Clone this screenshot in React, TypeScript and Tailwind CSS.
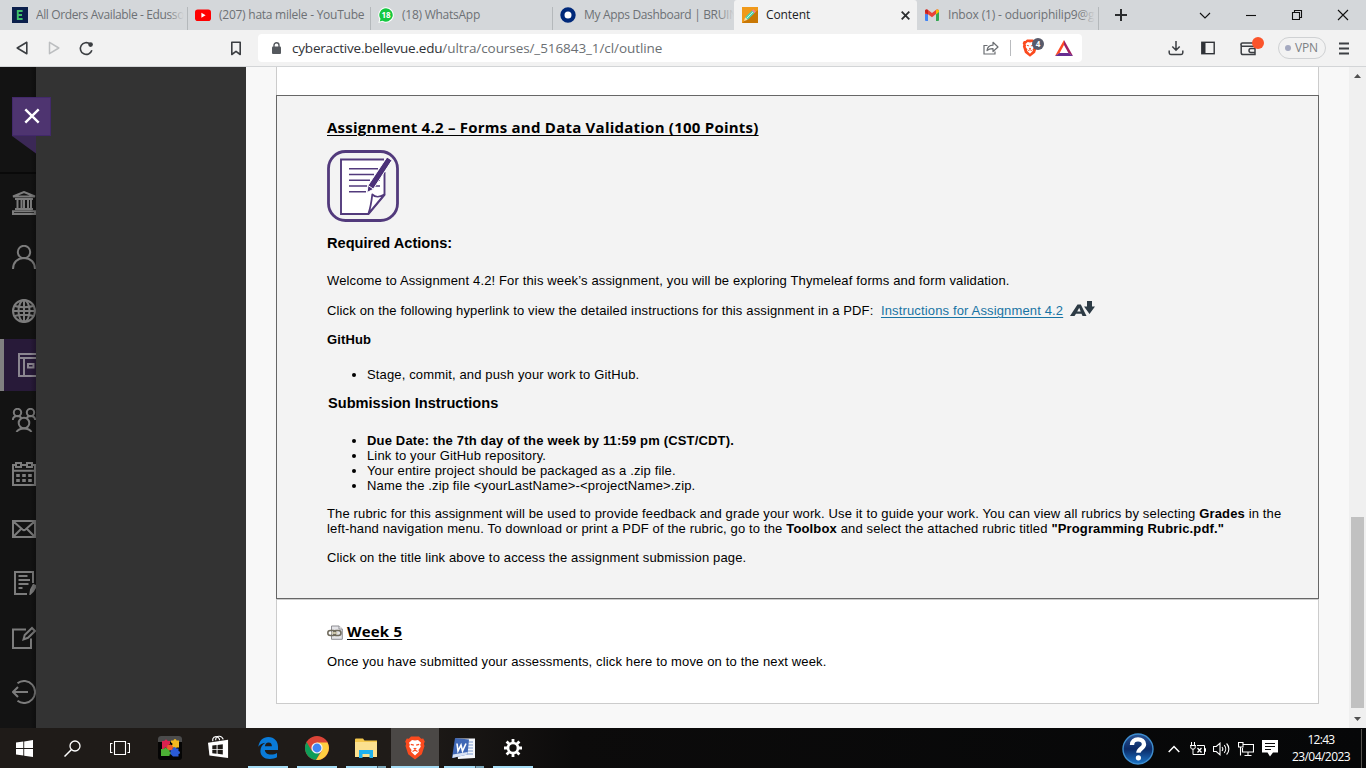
import React from "react";

const UI = "font-['Open_Sans','Noto_Sans',sans-serif]";

function BrowserTab({ icon, label, className, track, fade }: { icon: React.ReactNode; label: string; className: string; track: string; fade?: boolean }) {
  return (
    <div className={`flex h-[30px] shrink-0 items-center ${className}`}>
      <span className="flex size-4 shrink-0 items-center justify-center">{icon}</span>
      <span className={`relative ml-2 flex-1 overflow-hidden whitespace-nowrap text-[12px] leading-[18px] text-[#6d7175] ${track}`}>
        {label}
        {fade && <span className="absolute inset-y-0 right-0 w-4 bg-linear-to-r from-transparent to-[#d4d7da]" />}
      </span>
      <span className="ml-[3px] mt-[7px] h-[23px] w-px shrink-0 bg-[#b4b8bb]" />
    </div>
  );
}

function TabStrip() {
  return (
    <div className="flex h-[30px] shrink-0 bg-[#d4d7da]">
      <BrowserTab
        fade
        className="w-[188px] pl-3"
        track="tracking-[-0.38px]"
        label="All Orders Available - Edusso"
        icon={
          <svg width="16" height="16" viewBox="0 0 16 16">
            <rect width="16" height="16" fill="#0b1f4b" />
            <path d="M10.6 4H5.8v8h4.8M5.8 8h4.2" fill="none" stroke="#3fbf6a" strokeWidth="1.9" />
          </svg>
        }
      />
      <BrowserTab
        className="w-[183px] pl-[7px]"
        track="tracking-[-0.25px]"
        label="(207) hata milele - YouTube"
        icon={
          <svg width="16" height="16" viewBox="0 0 16 16">
            <rect y="2.5" width="16" height="11.5" rx="2.8" fill="#f00" />
            <path d="M6.4 5.8v5l4.2-2.5z" fill="#fff" />
          </svg>
        }
      />
      <BrowserTab
        className="w-[182px] pl-[7px]"
        track="tracking-[-0.25px]"
        label="(18) WhatsApp"
        icon={
          <svg width="16" height="16" viewBox="0 0 16 16">
            <path d="M8 .3a7.7 7.7 0 1 1-3.7 14.4L.3 15.9l1.1-4A7.7 7.7 0 0 1 8 .3z" fill="#fff" />
            <path d="M8 1.3a6.7 6.7 0 1 1-3.5 12.4l-2.8.9.8-2.8A6.7 6.7 0 0 1 8 1.3z" fill="#14c840" />
            <text x="8" y="11" textAnchor="middle" fontSize="8" fontWeight="700" fill="#fff" fontFamily="Open Sans, sans-serif">18</text>
          </svg>
        }
      />
      <BrowserTab
        fade
        className="w-[181px] pl-[7px] [&>span:last-child]:hidden"
        track="tracking-[-0.33px]"
        label="My Apps Dashboard | BRUIN"
        icon={
          <svg width="16" height="16" viewBox="0 0 16 16">
            <circle cx="8" cy="8" r="5.6" fill="#fff" stroke="#00297a" strokeWidth="4.2" />
          </svg>
        }
      />
      <div className="flex h-[30px] w-[183px] shrink-0 items-center rounded-t-[3px] bg-[#f2f2f2] pl-2 pr-[6px]">
        <svg width="16" height="16" viewBox="0 0 16 16">
          <rect width="16" height="16" fill="#f09a1a" />
          <path d="M0 16 16 3v13z" fill="#c97805" />
          <path d="M2 14l1.2-3.8 2.6 2.6z" fill="#f6dcae" />
          <path d="M3.2 10.2 10 3.4l2.6 2.6-6.8 6.8z" fill="#4fd1b0" />
          <path d="M4.5 11.5 11.3 4.7" stroke="#c9f5e4" strokeWidth="1" />
          <path d="m10 3.4 1.3-1.2 2.6 2.6L12.6 6z" fill="#f27d9d" />
        </svg>
        <span className="ml-2 text-[12px] leading-[18px] tracking-[-0.1px] text-[#202124]">Content</span>
        <svg className="ml-auto" width="11" height="11" viewBox="0 0 11 11">
          <path d="m1.700 1.700 7.600 7.600M9.300 1.700 1.700 9.300" stroke="#2c2e30" strokeWidth="1.800" />
        </svg>
      </div>
      <BrowserTab
        fade
        className="w-[182px] pl-[7px]"
        track="tracking-[-0.17px]"
        label="Inbox (1) - oduoriphilip9@g"
        icon={
          <svg width="16" height="16" viewBox="0 0 16 16">
            <path d="M1 3.500h3V14H2a1 1 0 0 1-1-1z" fill="#4285f4" />
            <path d="M12 3.500h3V13a1 1 0 0 1-1 1h-2z" fill="#34a853" />
            <path d="M1 7V4c0-1.700 1.800-2 2.800-1.200L8 6l4.200-3.200C13.200 2 15 2.300 15 4l-3 3-4 3.200L4 7.300z" fill="#ea4335" />
            <path d="M12 3v4.500L15 5V4c0-1.600-1.800-2-3-1z" fill="#fbbc04" />
            <path d="M1 4v1.300l3 2.300V3C2.800 2 1 2.400 1 4z" fill="#c5221f" />
          </svg>
        }
      />
      <div className="flex w-11 items-center justify-center">
        <svg width="14" height="14" viewBox="0 0 14 14">
          <path d="M7 1v12M1 7h12" stroke="#2a2c2e" strokeWidth="2" />
        </svg>
      </div>
      <div className="ml-auto flex">
        {["m1 4 5 5 5-5", "M1 6.500h10", "M3.500 3.500v-2h7v7h-2M1.500 3.500h7v7h-7z", "m1 1 10 10M11 1 1 11"].map((d) => (
          <div key={d} className="flex h-[29px] w-[46px] items-center justify-center">
            <svg width="12" height="12" viewBox="0 0 12 12">
              <path d={d} fill="none" stroke="#111" strokeWidth="1.100" />
            </svg>
          </div>
        ))}
      </div>
    </div>
  );
}

function BraveLion({ w, h }: { w: number; h: number }) {
  return (
    <svg width={w} height={h} viewBox="0 0 20 24">
      <path d="M6 .5h8l2.200 2.300 2-.3 1.600 3-.9 2.300.6 2.300-2.700 8.200L10 23.500l-6.800-5.200L.5 10.100l.6-2.300L.2 5.500l1.600-3 2 .3z" fill="#fb4a1e" />
      <path d="M10 4.500 13 4l3 2.800-.8 1.900.6 2-2.400 3.200.5 1.800L10 19.500l-3.900-3.800.5-1.800-2.400-3.200.6-2L4 6.800 7 4z" fill="#fff" />
      <path d="m5.800 8.400 3 .8M14.200 8.400l-3 .8M8.700 12.200l1.300.8 1.300-.8M7.500 15.500l2.500-1.300 2.500 1.300" fill="none" stroke="#fb4a1e" strokeWidth="1.200" />
    </svg>
  );
}

function Toolbar() {
  return (
    <div className="flex h-[37px] shrink-0 items-center border-b border-[#d3d5d7] bg-[#f2f2f2]">
      <svg className="ml-4" width="12" height="14" viewBox="0 0 12 14">
        <path d="M10.800 1.300v11.400L1.200 7z" fill="none" stroke="#3b3e42" strokeWidth="1.600" strokeLinejoin="round" />
      </svg>
      <svg className="ml-5" width="12" height="14" viewBox="0 0 12 14">
        <path d="M1.500 1.300v11.400L10.800 7z" fill="none" stroke="#bcbec0" strokeWidth="1.500" strokeLinejoin="round" />
      </svg>
      <svg className="ml-[19px]" width="15" height="15" viewBox="0 0 15 15">
        <path d="M12.900 9.300A5.900 5.900 0 1 1 11 2.900" fill="none" stroke="#3b3e42" strokeWidth="1.600" />
        <circle cx="11.600" cy="3.600" r="2.300" fill="#3b3e42" />
      </svg>
      <svg className="ml-[136px]" width="12" height="15" viewBox="0 0 12 15">
        <path d="M1.800 1.300h8.400v12.200L6 10.400l-4.200 3.100z" fill="none" stroke="#3b3e42" strokeWidth="1.600" strokeLinejoin="round" />
      </svg>
      <div className="ml-4 flex h-7 w-[824px] items-center rounded-[4px] bg-white pl-[14px]">
        <svg width="9" height="12" viewBox="0 0 9 12">
          <rect y="4.500" width="9" height="7.500" rx="1" fill="#55595e" />
          <path d="M2 5V3.300a2.500 2.500 0 0 1 5 0V5" fill="none" stroke="#55595e" strokeWidth="1.400" />
        </svg>
        <span className="ml-[11px] text-[13.500px] leading-5 tracking-[-0.200px] whitespace-nowrap text-[#303236]">cyberactive.bellevue.edu</span>
        <span className="text-[13.500px] leading-5 tracking-[-0.080px] whitespace-nowrap text-[#6b6f73]">/ultra/courses/_516843_1/cl/outline</span>
        <svg className="ml-auto" width="16" height="14" viewBox="0 0 16 14">
          <path d="M4.500 4.500H1V13h11v-2.500" fill="none" stroke="#6b6e72" strokeWidth="1.200" />
          <path d="M4 9.500C4.500 6 7 4.300 10 4.200V1.300L15 6l-5 4.500V7.600C7.500 7.500 5.500 8 4 9.500z" fill="none" stroke="#6b6e72" strokeWidth="1.200" strokeLinejoin="round" />
        </svg>
        <span className="ml-[11px] h-4 w-px bg-[#b9bbbe]" />
        <span className="relative ml-[11px] flex">
          <BraveLion w={16} h={18} />
          <span className="absolute -top-[1px] left-[10px] flex size-3 items-center justify-center rounded-full bg-[#585b6b] text-[8px] font-bold leading-none text-white">4</span>
        </span>
        <svg className="ml-[17px] mr-[9px]" width="18" height="16" viewBox="0 0 18 16">
          <path d="M9 0 0 16l4.500-2.800L9 5z" fill="#ff4a24" />
          <path d="M9 0l9 16-4.500-2.800L9 5z" fill="#9e1f63" />
          <path d="M0 16h18l-4.500-3h-9z" fill="#662d91" />
        </svg>
      </div>
      <svg className="ml-[86px]" width="16" height="16" viewBox="0 0 16 16">
        <path d="M8 1v9M4.300 6.500 8 10.200l3.700-3.700M1.200 10.500v2.300c0 1 .6 1.700 1.600 1.700h10.400c1 0 1.600-.7 1.600-1.700v-2.300" fill="none" stroke="#3b3e42" strokeWidth="1.500" />
      </svg>
      <svg className="ml-[17px]" width="14" height="14" viewBox="0 0 14 14">
        <rect x=".8" y="1.300" width="12.400" height="11.400" fill="none" stroke="#2f3237" strokeWidth="1.400" />
        <path d="M1 1.500h3.500v11H1z" fill="#2f3237" />
      </svg>
      <span className="relative ml-[25px] flex">
        <svg width="17" height="15" viewBox="0 0 17 15">
          <path d="M13 2H2.500a1.500 1.500 0 0 0 0 3.200H15v8.300H3a1.800 1.800 0 0 1-1.800-1.800V3.500M15 7.500h-4a2 2 0 0 0 0 4h4" fill="none" stroke="#3b3e42" strokeWidth="1.500" />
        </svg>
        <span className="absolute -top-[4px] left-[12px] size-3 rounded-full bg-[#fb542b]" />
      </span>
      <div className="ml-[21px] flex h-[22px] w-12 items-center rounded-full border border-[#cfd1d3] pl-[6px]">
        <span className="size-[6px] rounded-full bg-[#a4a9c0]" />
        <span className="ml-1 text-[12px] leading-4 tracking-[-0.200px] text-[#7c8084]">VPN</span>
      </div>
      <svg className="ml-[13px]" width="10" height="13" viewBox="0 0 10 13">
        <path d="M0 1.500h10M0 6.500h10M0 11.500h10" stroke="#3d4044" strokeWidth="2" />
      </svg>
    </div>
  );
}

const navIcons: React.ReactNode[] = [
  <>
    <path d="M1 5.500 12 1l11 4.500H1zM3 8h18M5.500 8v9.500M9.500 8v9.500M12 8v9.500M16 8v9.500M19 8v9.500M3 18h18M1 20.300h22V23H1z" />
  </>,
  <>
    <circle cx="12" cy="7" r="6.200" />
    <path d="M1 24c0-6.500 4.500-11 11-11s11 4.500 11 11" />
  </>,
  <>
    <circle cx="12" cy="12" r="11" />
    <ellipse cx="12" cy="12" rx="5.500" ry="11" />
    <path d="M12 1v22M1 12h22M2.500 7c6 1.500 13 1.500 19 0M2.500 17c6-1.500 13-1.500 19 0" />
  </>,
  <>
    <path d="M24 1H1v22h23M1 5h23M6 5v18M10 11h5.500v3.500H10z" />
  </>,
  <>
    <circle cx="5.500" cy="4.500" r="3.700" />
    <circle cx="18.500" cy="4.500" r="3.700" />
    <circle cx="12" cy="15" r="5.300" />
    <path d="M.8 12c.2-2.500 2-4 4.700-4 1.700 0 3 .5 4 2M23.200 12c-.2-2.500-2-4-4.700-4-1.700 0-3 .5-4 2M4.500 24c1.500-2.500 4.500-3.500 7.500-3.500s6 1 7.500 3.500" />
  </>,
  <>
    <path d="M4 3H1v20h22V3h-3M9 3h6M1 8.800h22M4 1h5v4H4zM15 1h5v4h-5z" />
    <path d="M4.200 13.500h3.600M10.200 13.500h3.600M16.200 13.500h3.600M4.200 18.500h3.600M10.200 18.500h3.600M16.200 18.500h3.600" strokeWidth="3" />
  </>,
  <>
    <path d="M1 4h22v16H1zM1.500 4.500l9 8c1 .8 2 .8 3 0l9-8M1.500 19.500l8-8M22.500 19.500l-8-8" />
  </>,
  <>
    <path d="M15 23H3V1h18v11M6.500 5h9M6.500 9h11.500M6.500 13h10M6.500 17h4" />
    <path d="m18.500 22.500.5-3.800 2.500-4.700 2.500 1-3 5.200z" fill="#7c7c7c" />
  </>,
  <>
    <path d="M14 3.500H1V22h18V12.500" />
    <path d="m11.500 13.500 1.200-4.500L20 2l3 3-7 6.800z" />
  </>,
  <>
    <path d="M5.500 3.200A11 11 0 1 1 5.500 20.800M16 12H1M6 7l-5 5 5 5" />
  </>,
];
const navGaps = ["", "", "", "", "mt-px", "", "mt-px", "", "mt-px", ""];

function SideNav() {
  return (
    <>
      <aside className="relative w-9 shrink-0 bg-[#131313]">
        <div className="h-[107px] border-b-2 border-[#090909]" />
        <div className="h-full max-h-[554px] overflow-hidden pt-[2px]">
          {navIcons.map((icon, i) => (
            <div key={i} className={`flex h-[54px] items-center ${navGaps[i]}`}>
              <div className={i === 3 ? "flex h-[52px] w-9 items-center overflow-hidden border-l-4 border-[#808080] bg-[#281a39] pl-[14px]" : "flex w-9 pl-3"}>
                <svg className="shrink-0" width="24" height="24" viewBox="0 0 24 24" fill="none" stroke={i === 3 ? "#8b8690" : "#7c7c7c"} strokeWidth="2">
                  {icon}
                </svg>
              </div>
            </div>
          ))}
        </div>
        <div className="absolute inset-y-0 right-0 w-[6px] bg-linear-to-r from-transparent to-black/25" />
        <svg className="absolute left-3 top-[69px]" width="24" height="18" viewBox="0 0 24 18">
          <path d="M0 0h24v17.500z" fill="#3b2856" />
        </svg>
        <button className="absolute left-3 top-[30px] z-10 flex size-[39px] items-center justify-center border border-[#42296a] bg-[#4e3470] pb-[2px]">
          <svg width="16" height="16" viewBox="0 0 16 16">
            <path d="m1.300 1.300 13.400 13.400M14.700 1.300 1.300 14.700" stroke="#fff" strokeWidth="2.400" />
          </svg>
        </button>
      </aside>
      <div className="w-[210px] shrink-0 bg-[#333333]" />
    </>
  );
}

function AssignmentIcon() {
  return (
    <svg className="mt-[13px] block" width="72" height="72" viewBox="0 0 72 72">
      <rect x="1.500" y="1.500" width="69" height="69" rx="17" fill="#f3f3f3" stroke="#523a7c" strokeWidth="2.800" />
      <path d="M14 9.500h44v36L42 64H14z" fill="#fff" />
      <path d="M57 9.500H14V64h27.500L57.500 45V22" fill="none" stroke="#523a7c" strokeWidth="1.900" />
      <path d="M41.500 63.500c2-6 3-12 3.800-19 3 3 8 2.500 12 0z" fill="#fff" stroke="#523a7c" strokeWidth="1.800" strokeLinejoin="round" />
      <path d="M22 18.800h29M22 24.500h25M22 30.300h21M22 36h18M22 41.800h17M47 36h6M51 30.300h2" stroke="#523a7c" strokeWidth="1.500" />
      <path d="m60 7 5 3.300L46 39.500l-6 3 1-7z" fill="#4b3078" stroke="#fff" strokeWidth="1" />
      <path d="m41.200 35.600 5 3.300" stroke="#fff" strokeWidth="1" />
    </svg>
  );
}

function Page() {
  return (
    <main className="flex min-w-0 flex-1 flex-col overflow-hidden bg-[#f8f8f8] pl-[30px] font-['Liberation_Sans',Arial,sans-serif] text-[13px] leading-[15px] tracking-[0.145px] text-black">
      <div className="h-7 w-[1043px] shrink-0 border-x border-[#ccc] bg-white" />
      <section className="h-[504px] w-[1043px] shrink-0 border border-[#666] bg-[#f3f3f3] pl-[50px] pt-[21px] whitespace-nowrap">
        <h3 className="font-['Open_Sans',sans-serif] text-[15px] font-bold leading-5 tracking-[0.235px] underline decoration-1 underline-offset-2">
          Assignment 4.2 – Forms and Data Validation (100 Points)
        </h3>
        <AssignmentIcon />
        <h4 className="mt-[13px] text-[14.600px] font-bold leading-[17px] tracking-normal">Required Actions:</h4>
        <p className="mt-[21px]">Welcome to Assignment 4.2! For this week’s assignment, you will be exploring Thymeleaf forms and form validation.</p>
        <p className="mt-[15px] flex h-[15px]">
          Click on the following hyperlink to view the detailed instructions for this assignment in a PDF:
          <a className="ml-[7.500px] text-[#1874a4] underline decoration-1 underline-offset-2">Instructions for Assignment 4.2</a>
          <svg className="-mt-[2px] ml-[7px]" width="25" height="16" viewBox="0 0 25 16">
            <path fillRule="evenodd" d="M0 15 7.500 3.500h3.300L16.500 15h-4l-1-2.200H6L4.500 15zM7.200 10.500h3.500L9.200 6.800z" fill="#2d3b45" />
            <path d="M17 0h5v5.500h3L19.500 13 14 5.500h3z" fill="#2d3b45" />
          </svg>
        </p>
        <p className="mt-[14px] font-bold">GitHub</p>
        <ul className="mt-5 list-disc pl-10">
          <li>Stage, commit, and push your work to GitHub.</li>
        </ul>
        <h4 className="mt-[13px] pl-px text-[14.600px] font-bold leading-[17px] tracking-normal">Submission Instructions</h4>
        <ul className="mt-[21px] list-disc pl-10">
          <li className="font-bold tracking-[0.168px]">Due Date: the 7th day of the week by 11:59 pm (CST/CDT).</li>
          <li>Link to your GitHub repository.</li>
          <li>Your entire project should be packaged as a .zip file.</li>
          <li>Name the .zip file &lt;yourLastName&gt;-&lt;projectName&gt;.zip.</li>
        </ul>
        <p className="mt-[13px]">
          The rubric for this assignment will be used to provide feedback and grade your work. Use it to guide your work. You can view all rubrics by selecting <b>Grades</b> in the
          <br />
          left-hand navigation menu. To download or print a PDF of the rubric, go to the <b>Toolbox</b> and select the attached rubric titled <b>"Programming Rubric.pdf."</b>
        </p>
        <p className="mt-[14px]">Click on the title link above to access the assignment submission page.</p>
      </section>
      <section className="h-[105px] w-[1043px] shrink-0 border border-[#ccc] bg-white pl-[50px] pt-[21px] whitespace-nowrap">
        <div className="flex h-5 items-center">
          <svg className="mt-[2px]" width="16" height="15" viewBox="0 0 16 15">
            <path d="M4.500 1h7.500l3.300 3v10.300H4.500z" fill="#e4e4e8" stroke="#8e8e93" />
            <path d="M12 1v3h3.300" fill="#fff" stroke="#8e8e93" />
            <rect x=".8" y="5.500" width="8" height="5" rx="2.500" fill="none" stroke="#6f6a5c" strokeWidth="1.500" />
            <rect x="6.500" y="5.500" width="7.500" height="5" rx="2.500" fill="none" stroke="#6f6a5c" strokeWidth="1.500" />
            <path d="M4.500 8h6" stroke="#d9d2b4" strokeWidth="1.500" />
          </svg>
          <h3 className="ml-1 font-['Open_Sans',sans-serif] text-[15px] font-bold leading-5 tracking-[0.200px] underline decoration-1 underline-offset-2">Week 5</h3>
        </div>
        <p className="mt-[13px]">Once you have submitted your assessments, click here to move on to the next week.</p>
      </section>
    </main>
  );
}

function ScrollTrack() {
  return (
    <div className="flex w-[17px] shrink-0 flex-col items-center bg-[#f0f0f0]">
      <svg className="mt-[7px] shrink-0" width="7" height="4" viewBox="0 0 7 4">
        <path d="M0 4h7L3.500 0z" fill="#505050" />
      </svg>
      <div className="mt-auto h-[191px] w-[13px] bg-[#c1c1c1]" />
      <svg className="mb-[7px] mt-[9px] shrink-0" width="7" height="4" viewBox="0 0 7 4">
        <path d="M0 0h7L3.500 4z" fill="#505050" />
      </svg>
    </div>
  );
}

function TaskItem({ children, className, bar }: { children: React.ReactNode; className: string; bar?: string }) {
  return (
    <div className={`flex h-10 shrink-0 flex-col items-center ${className}`}>
      <div className="flex h-[38px] items-center pt-[2px]">{children}</div>
      {bar && (
        <div className={`flex h-[2px] justify-end bg-[#a5dcf5] ${bar === "full" ? "w-full" : "w-10"}`}>
          {bar === "stack" && <span className="w-[9px] border-l border-[#4a5d68] bg-[#7ba6b9]" />}
        </div>
      )}
    </div>
  );
}

function Taskbar() {
  return (
    <footer className="flex h-10 shrink-0 bg-linear-to-r from-[#1f1b18] from-30% via-[#0c0b0b] via-42% to-[#060708]">
      <TaskItem className="w-12">
        <svg width="17" height="17" viewBox="0 0 17 17">
          <path d="M0 2.500 7.300 1.500V8H0zM8.200 1.400 17 0v8H8.200zM0 9h7.300v6.500L0 14.500zM8.200 9H17v8l-8.800-1.300z" fill="#fff" />
        </svg>
      </TaskItem>
      <TaskItem className="w-12">
        <svg width="17" height="17" viewBox="0 0 17 17">
          <circle cx="11" cy="6" r="5" fill="none" stroke="#fff" strokeWidth="1.300" />
          <path d="m7.500 9.500-7 7" stroke="#fff" strokeWidth="1.500" />
        </svg>
      </TaskItem>
      <TaskItem className="w-12">
        <svg width="20" height="14" viewBox="0 0 20 14">
          <path d="M4.500.5h11v13h-11zM2.500 2.500h-2v9h2M17.500 2.500h2v9h-2" fill="none" stroke="#fff" strokeWidth="1.100" />
        </svg>
      </TaskItem>
      <TaskItem className="w-[50px]">
        <svg className="ml-px" width="24" height="24" viewBox="0 0 24 24">
          <rect width="24" height="24" rx="3" fill="#050505" />
          <path d="M0 3a3 3 0 0 1 3-3h18a3 3 0 0 1 3 3v3H0z" fill="#4b4b4b" />
          <path d="M4 5h2.500a1.500 1.500 0 1 1 3 0H12v3a1.500 1.500 0 1 0 0 3v2H9a1.500 1.500 0 1 0-3 0H4z" fill="#d9224f" />
          <path d="M13 4.500h2.500a1.500 1.500 0 1 1 3 0H21v7h-2.500a1.500 1.500 0 1 1-3 0H13V9.500a1.500 1.500 0 1 0 0-3z" fill="#f2b81f" />
          <path d="M3 13h3a1.500 1.500 0 1 1 3 0h2.500v2.500a1.500 1.500 0 1 1 0 3V20H3z" fill="#4caf35" />
          <path d="M12.500 12.500H15a1.500 1.500 0 1 1 3 0h2.500V15a1.500 1.500 0 1 1 0 3v2.500H15L12.500 18z" fill="#2a5bd7" />
          <path d="m9.500 9 3-.500 2.500 2-.5 3-3 1-2.500-2z" fill="#ec5a2b" />
        </svg>
      </TaskItem>
      <TaskItem className="w-[49px]">
        <svg className="-mt-[2px]" width="21" height="24" viewBox="0 0 22 24">
          <path d="M5 6V3.500C6 .3 10.500.3 12 3.500V5M8 5c0-5 6-6 8-1" fill="none" stroke="#fff" strokeWidth="1.200" />
          <path d="M0 7.500 21 4.500v19L1.500 21z" fill="#fff" />
          <path d="m4.500 10.500 4.500-.5v4H4.500zM10 9.800l5.500-.6V14H10zM4.500 15H9v4l-4.500-.5zM10 15h5.500v4.800L10 19.200z" fill="#1c1916" />
        </svg>
      </TaskItem>
      <TaskItem className="w-[50px]" bar="single">
        <svg width="20" height="22" viewBox="0 0 20 22">
          <path d="M.3 9.800C1.200 3.700 5 0 10.300 0 16.500 0 20 4.500 20 9.800V13H6.800c.3 3 3 4.600 6.200 4.600 2.400 0 4.300-.6 6-1.600v4.300c-2 1.100-4.500 1.700-7.200 1.700C6 22 2.400 18.500 2.400 14c0-3.600 2-6.600 5-8.200C4.300 6.300 1.900 7.600.3 9.800zM6.900 9.300h7c0-2.300-1-3.900-3.400-3.900-2 0-3.300 1.600-3.600 3.900z" fill="#0a7bd8" />
        </svg>
      </TaskItem>
      <TaskItem className="w-12" bar="single">
        <svg width="24" height="24" viewBox="0 0 24 24">
          <circle cx="12" cy="12" r="12" fill="#db4437" />
          <path d="M1.600 6A12 12 0 0 0 11 24l4.700-8.500L12 12 6.800 15z" fill="#0f9d58" />
          <path d="M22.500 6.500H12l4.800 8.500L11 24A12 12 0 0 0 22.500 6.500z" fill="#ffcd40" />
          <circle cx="12" cy="12" r="5.600" fill="#f4f4f4" />
          <circle cx="12" cy="12" r="4.400" fill="#4285f4" />
        </svg>
      </TaskItem>
      <TaskItem className="w-[50px]" bar="stack">
        <svg width="22" height="20" viewBox="0 0 22 20">
          <path d="M0 1.500A1 1 0 0 1 1 .5h7l1.500 2H22v16.500H0z" fill="#f4c84d" />
          <path d="M0 4h22v15H0z" fill="#fbe08f" />
          <path d="M4 20v-8h14v8h-3.500v-4h-7v4z" fill="#1eb1ee" />
        </svg>
      </TaskItem>
      <TaskItem className="w-12 bg-[#4b4846]" bar="full">
        <BraveLion w={20} h={24} />
      </TaskItem>
      <TaskItem className="w-[50px]" bar="stack">
        <svg className="-ml-[2px]" width="23" height="23" viewBox="0 0 23 23">
          <path d="M4 1.500h19v19.500l-17 1z" fill="#f3f6fb" />
          <path d="M14 5h7M14 8h7M14 11h7M12 14h9M12 17h9" stroke="#7d9ad0" strokeWidth="1.100" />
          <path d="m3 1 14 1.500-1.500 15L0 21z" fill="#3f67b5" />
          <path d="m5 6.500 1 7.500L9 8l1.500 6L14 6.500" fill="none" stroke="#fff" strokeWidth="1.600" />
          <path d="M1 17.500 15.500 15v2.500L.5 21z" fill="#d7e1f3" />
        </svg>
      </TaskItem>
      <TaskItem className="w-12" bar="single">
        <svg width="18" height="18" viewBox="0 0 18 18">
          <circle cx="9" cy="9" r="5" fill="none" stroke="#fff" strokeWidth="2.700" />
          <path d="M9 0v3.500M9 14.500V18M0 9h3.500M14.500 9H18M2.600 2.600l2.500 2.500M12.900 12.900l2.500 2.500M15.400 2.600l-2.500 2.500M5.100 12.900l-2.500 2.500" stroke="#fff" strokeWidth="2.800" />
        </svg>
      </TaskItem>
      <div className="ml-auto flex items-center pt-px">
        <svg width="32" height="32" viewBox="0 0 32 32">
          <defs>
            <linearGradient id="help" x1="0" y1="0" x2="0" y2="1">
              <stop offset="0" stopColor="#2a5596" />
              <stop offset=".5" stopColor="#0b2a66" />
              <stop offset="1" stopColor="#1c75c8" />
            </linearGradient>
          </defs>
          <circle cx="16" cy="16" r="15" fill="url(#help)" stroke="#3f8fd0" strokeWidth="1.400" />
          <path d="M10 12c0-3.600 2.600-5.600 6-5.600s6 1.900 6 4.800c0 4.300-5.600 4.200-5.600 8.600" fill="none" stroke="#fff" strokeWidth="4.400" />
          <circle cx="16.400" cy="24.800" r="2.600" fill="#fff" />
        </svg>
        <svg className="ml-[14px]" width="12" height="8" viewBox="0 0 12 8">
          <path d="m.7 7 5.300-5.500L11.300 7" fill="none" stroke="#fff" strokeWidth="1.500" />
        </svg>
        <svg className="ml-[10px]" width="16" height="14" viewBox="0 0 16 14">
          <path d="M1.500 0v3M4.500 0v3M0 3.500h6M.8 3.500V6c0 1.500 4.400 1.500 4.400 0V3.500M3 7v5.500h3M7 3.500h7.500v9H5M14.500 6.500h1v3h-1" fill="none" stroke="#fff" />
          <path d="m7.500 6 4 4.500M11.500 6l-4 4.500" stroke="#fff" strokeWidth="1.300" />
        </svg>
        <svg className="ml-[7px]" width="17" height="14" viewBox="0 0 17 14">
          <path d="M.5 4.500h2.800L7 1.200v11.600L3.300 9.500H.5zM9 5c1 1.200 1 2.800 0 4M11.200 3.200c2 2.200 2 5.400 0 7.600M13.600 1.500c3 3.200 3 7.800 0 11" fill="none" stroke="#fff" strokeWidth="1.100" />
        </svg>
        <svg className="ml-2" width="16" height="14" viewBox="0 0 16 14">
          <path d="M5 2.500h10.500v7.500H4.500V6M.5.500H5V5H.5zM2.500 5v8.500M10 10v3M6.500 13.500h7" fill="none" stroke="#fff" strokeWidth="1.100" />
        </svg>
        <svg className="ml-2" width="16" height="17" viewBox="0 0 16 17">
          <path d="M0 0h16v12.500h-5L8 16.500l-2.500-4H0z" fill="#fff" />
          <path d="M3 3.500h10M3 6.500h10M3 9.500h6" stroke="#0a0a0a" strokeWidth="1.100" />
        </svg>
        <div className="-mt-[2px] ml-[13px] flex w-[60px] flex-col items-center text-[12px] leading-[17px] text-white">
          <span className="tracking-[-0.700px]">12:43</span>
          <span className="tracking-[-0.550px]">23/04/2023</span>
        </div>
        <span className="ml-[10px] mr-1 h-10 w-px bg-[#55534f]" />
      </div>
    </footer>
  );
}

export default function App() {
  return (
    <div className={`flex h-[768px] w-[1366px] flex-col overflow-hidden ${UI}`}>
      <TabStrip />
      <Toolbar />
      <div className="flex h-[661px] shrink-0">
        <SideNav />
        <Page />
        <ScrollTrack />
      </div>
      <Taskbar />
    </div>
  );
}
